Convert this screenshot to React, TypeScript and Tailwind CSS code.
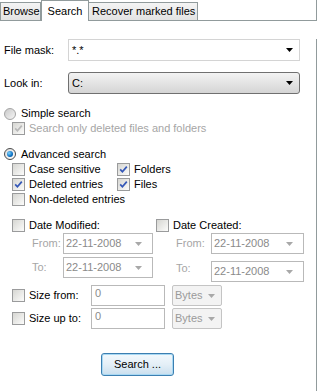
import React from "react";

// small XP-ish form bits
const Arrow = ({ color = "#000" }: { color?: string }) => (
  <svg width="7" height="4" viewBox="0 0 7 4" className="shrink-0">
    <path d="M0 0 H7 L3.5 4 Z" fill={color} />
  </svg>
);

const Check = ({ checked = false, disabled = false }: { checked?: boolean; disabled?: boolean }) => (
  <span className="w-[13px] h-[13px] shrink-0 border border-[#9a9b9c] bg-linear-to-br from-[#d6d6d2] to-[#fcfcfb] flex items-center justify-center">
    {checked && (
      <svg width="9" height="9" viewBox="0 0 9 9">
        <path
          d="M1.2 4.4 L3.4 6.8 L7.8 1.6"
          stroke={disabled ? "#b8b8b8" : "#3457b7"}
          strokeWidth="1.7"
          fill="none"
        />
      </svg>
    )}
  </span>
);

const Radio = ({ on = false }: { on?: boolean }) =>
  on ? (
    <span className="w-[12px] h-[12px] shrink-0 rounded-full border border-[#4a4a4a] bg-linear-to-br from-[#dcdcdc] to-white flex items-center justify-center">
      <span className="w-[6px] h-[6px] rounded-full bg-[radial-gradient(circle_at_35%_35%,#7fd4ff,#0a6fc2_60%,#064c8a)]" />
    </span>
  ) : (
    <span className="w-[12px] h-[12px] shrink-0 rounded-full border border-[#a4a4a4] bg-linear-to-br from-[#c9c9c9] to-[#f6f6f6]" />
  );

const DateBox = ({ w }: { w: string }) => (
  <div className={`${w} h-[21px] border border-[#b9b9b9] bg-white flex items-center justify-between pl-[2px] pr-[10px] text-[#8a8a8a]`}>
    <span>22-11-2008</span>
    <Arrow color="#a8a8a8" />
  </div>
);

const SizeRow = ({ label }: { label: string }) => (
  <div className="h-[21px] flex items-center">
    <div className="pl-[12px] w-[91px] flex items-center gap-[4px]">
      <Check />
      <span>{label}</span>
    </div>
    <div className="w-[74px] h-[21px] border border-[#b9b9b9] bg-white pl-[3px] text-[#8a8a8a] leading-[15px]">0</div>
    <div className="ml-[7px] w-[50px] h-[21px] border border-[#c4c4c4] rounded-[2px] bg-[#f3f3f3] flex items-center justify-between pl-[2px] pr-[6px] text-[#9a9a9a]">
      <span>Bytes</span>
      <Arrow color="#a8a8a8" />
    </div>
  </div>
);

export default function App() {
  return (
    <div className="w-[318px] h-[391px] bg-white overflow-hidden text-[11px] text-black whitespace-nowrap font-['Liberation_Sans',Arial,sans-serif]">
      {/* tabs */}
      <div className="w-[317px] h-[21px] flex items-end">
        <div className="w-[41px] h-[19px] border border-[#919b9c] bg-linear-to-b from-[#f4f4f4] to-[#e3e3e3] flex items-center pl-[2px]">
          Browse
        </div>
        <div className="w-[48px] h-[21px] border border-b-0 border-[#919b9c] bg-white flex items-center justify-center">
          Search
        </div>
        <div className="w-[109px] h-[19px] border border-l-0 border-[#919b9c] bg-linear-to-b from-[#f4f4f4] to-[#e3e3e3] flex items-center pl-[3px]">
          Recover marked files
        </div>
        <div className="flex-1 h-full border-b border-r border-[#919b9c]" />
      </div>

      {/* panel */}
      <div className="w-[317px] h-[370px] border-r border-[#919b9c]">
        <div className="mt-[18px] h-[22px] flex items-center">
          <span className="w-[68px] pl-[4px]">File mask:</span>
          <div className="w-[232px] h-[22px] border border-[#d4d4d4] bg-white flex items-center justify-between pl-[3px] pr-[6px]">
            <span>*.*</span>
            <Arrow />
          </div>
        </div>
        <div className="mt-[11px] h-[22px] flex items-center">
          <span className="w-[68px] pl-[4px]">Look in:</span>
          <div className="w-[232px] h-[22px] rounded-[3px] border border-[#707070] bg-linear-to-b from-[#f3f3f3] to-[#d5d5d5] flex items-center justify-between pl-[3px] pr-[6px]">
            <span>C:</span>
            <Arrow />
          </div>
        </div>

        <div className="mt-[12px] h-[15px] flex items-center pl-[4px] gap-[5px]">
          <Radio />
          <span>Simple search</span>
        </div>
        <div className="h-[15px] flex items-center pl-[12px] gap-[4px] text-[#a6a6a6]">
          <Check checked disabled />
          <span>Search only deleted files and folders</span>
        </div>

        <div className="mt-[10px] h-[16px] flex items-center pl-[4px] gap-[5px]">
          <Radio on />
          <span>Advanced search</span>
        </div>
        <div className="grid grid-cols-[105px_1fr] pl-[12px]">
          <div className="h-[15px] flex items-center gap-[4px]"><Check /><span>Case sensitive</span></div>
          <div className="h-[15px] flex items-center gap-[4px]"><Check checked /><span>Folders</span></div>
          <div className="h-[15px] flex items-center gap-[4px]"><Check checked /><span>Deleted entries</span></div>
          <div className="h-[15px] flex items-center gap-[4px]"><Check checked /><span>Files</span></div>
          <div className="h-[15px] flex items-center gap-[4px] col-span-2"><Check /><span>Non-deleted entries</span></div>
        </div>

        {/* dates */}
        <div className="mt-[10px] flex">
          <div className="w-[156px] pl-[12px]">
            <div className="h-[16px] flex items-center gap-[4px]"><Check /><span>Date Modified:</span></div>
            <div className="flex items-center h-[21px]">
              <span className="w-[51px] pl-[20px] text-[#a6a6a6]">From:</span>
              <DateBox w="w-[90px]" />
            </div>
            <div className="mt-[3px] flex items-center h-[21px]">
              <span className="w-[51px] pl-[20px] text-[#a6a6a6]">To:</span>
              <DateBox w="w-[90px]" />
            </div>
          </div>
          <div className="flex-1">
            <div className="h-[16px] flex items-center gap-[4px]"><Check /><span>Date Created:</span></div>
            <div className="flex items-center h-[21px]">
              <span className="w-[55px] pl-[20px] text-[#a6a6a6]">From:</span>
              <DateBox w="w-[93px]" />
            </div>
            <div className="mt-[7px] flex items-center h-[21px]">
              <span className="w-[55px] pl-[20px] text-[#a6a6a6] -mt-[6px]">To:</span>
              <DateBox w="w-[93px]" />
            </div>
          </div>
        </div>

        <div className="mt-[3px]">
          <SizeRow label="Size from:" />
          <div className="mt-[2px]">
            <SizeRow label="Size up to:" />
          </div>
        </div>

        <button className="mt-[24px] ml-[101px] w-[73px] h-[23px] rounded-[3px] border border-[#3c7fb1] bg-linear-to-b from-[#f2f9fd] via-[#e4eff7] to-[#c9dfee] shadow-[inset_0_0_0_1px_#a8d8f3] flex items-center justify-center">
          Search ...
        </button>
      </div>
    </div>
  );
}
